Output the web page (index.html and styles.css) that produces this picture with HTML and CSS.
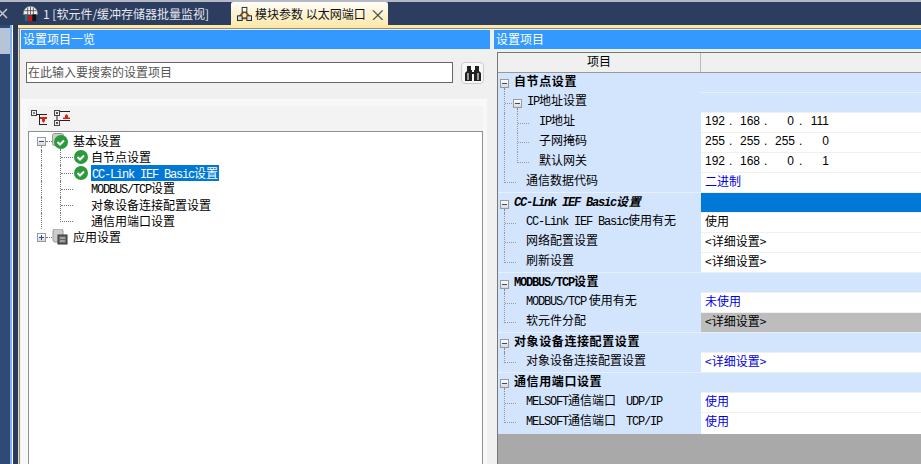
FILE: index.html
```html
<!DOCTYPE html>
<html lang="zh-CN">
<head>
  <meta charset="UTF-8">
  <title>模块参数 以太网端口</title>
  <link rel="stylesheet" href="styles.css">
</head>
<body>
  <div class="tabbar">
    <span class="tab-x">
      <svg width="8" height="11" viewBox="0 0 8 11">
        <path d="M-2 1l9 9M7 1l-9 9" stroke="#c4cbd6" stroke-width="1.500" fill="none"/>
      </svg>
    </span>
    <div class="tab">
      <svg class="tab-icon" viewBox="0 0 16 16">
        <path d="M0.500 9C0.500 3 4 0.500 8 0.500s7.500 2.500 7.500 8.500z" fill="#f4f4f4" stroke="#888"/>
        <path d="M5 2v7M8 1v8M11 2v7M2 5h12" stroke="#555"/>
        <rect x="2" y="9" width="3" height="7" fill="#0a7a7a"/>
        <rect x="5" y="10" width="5" height="6" fill="#d01020"/>
        <rect x="10" y="9" width="4" height="7" fill="#111"/>
      </svg>
      <span>1 [软元件/缓冲存储器批量监视]</span>
    </div>
    <div class="tab tab-active">
      <svg class="tab-icon" viewBox="0 0 16 16">
        <path d="M8 5L3 11M8 5l5 6M3 13h10" stroke="#8a4a10" stroke-width="2" fill="none"/>
        <rect x="5.5" y="1.5" width="5" height="5" fill="#fff" stroke="#222"/>
        <rect x="0.5" y="10.5" width="5" height="5" fill="#ddd" stroke="#222"/>
        <rect x="10.5" y="10.5" width="5" height="5" fill="#ddd" stroke="#222"/>
      </svg>
      <span>模块参数 以太网端口</span>
      <span class="tab-close">×</span>
    </div>
  </div>

  <div class="workspace">
    <div class="gutter">
      <div class="gutter-tab"></div>
    </div>

    <div class="content">
      <div class="accent"></div>
      <div class="panes">
        <section class="pane-left">
          <h2 class="pane-title">设置项目一览</h2>
          <div class="search-row">
            <div class="search-input">在此输入要搜索的设置项目</div>
            <div class="search-btn">
              <svg width="18" height="16" viewBox="0 0 18 16">
                <path d="M3 1h4v4h1v2h2V5h1V1h4v5l2 2v8h-7V9H8v7H1V8l2-2z" fill="#222"/>
                <path d="M3 8h2v7H3zM13 8h2v7h-2z" fill="#999"/>
              </svg>
            </div>
          </div>
          <div class="tree-box">
            <div class="tree-tools">
              <svg width="16" height="16" viewBox="0 0 16 16">
                <rect x="0.5" y="0.5" width="5" height="5" fill="#eee" stroke="#444"/>
                <path d="M2 3h2M6 4.500h10M8.500 4.500v10.500M8.500 14.500h7.500" stroke="#222" fill="none"/>
                <path d="M9 7h7v2h-2v2l-1.500 2-1.500-2V9H9z" fill="#e02010"/>
              </svg>
              <svg width="16" height="16" viewBox="0 0 16 16">
                <rect x="0.500" y="0.500" width="5" height="5" fill="#eee" stroke="#444"/>
                <rect x="0.500" y="10.500" width="5" height="5" fill="#eee" stroke="#444"/>
                <path d="M2 3h2M3 2v2M2 13h2M3 12v2M6 1.500h10M6 10.500h10M3 6v4" stroke="#222" fill="none"/>
                <path d="M9 9V7.500h2V5.500L12.500 4 14 5.500v2h2V9z" fill="#e02010"/>
              </svg>
            </div>
            <div class="tree">
              <div class="tree-row">
                <span class="box box-open"></span><span class="dash"></span>
                <svg class="tree-icon" width="16" height="16" viewBox="0 0 16 16">
                  <rect x="0.500" y="0.500" width="11" height="12" rx="2" fill="#ccc" stroke="#999"/>
                  <circle cx="9" cy="9" r="7" fill="#2a9a3a"/>
                  <path d="M5.500 9l2.500 2.500 4-4" stroke="#fff" stroke-width="2" fill="none"/>
                </svg>
                <span class="tree-text">基本设置</span>
              </div>
              <div class="tree-row">
                <span class="tree-bar"></span><span class="tee"></span>
                <svg class="check" width="14" height="14" viewBox="0 0 14 14">
                  <circle cx="7" cy="7" r="7" fill="#2a9a3a"/>
                  <path d="M3.500 7l2.500 2.500 4-4" stroke="#fff" stroke-width="2" fill="none"/>
                </svg>
                <span class="tree-text">自节点设置</span>
              </div>
              <div class="tree-row">
                <span class="tree-bar"></span><span class="tee"></span>
                <svg class="check" width="14" height="14" viewBox="0 0 14 14">
                  <circle cx="7" cy="7" r="7" fill="#2a9a3a"/>
                  <path d="M3.500 7l2.500 2.500 4-4" stroke="#fff" stroke-width="2" fill="none"/>
                </svg>
                <span class="tree-text selected"><span class="en">CC-Link IEF Basic</span>设置</span>
              </div>
              <div class="tree-row">
                <span class="tree-bar"></span><span class="tee"></span>
                <span class="tree-text no-icon"><span class="en">MODBUS/TCP</span>设置</span>
              </div>
              <div class="tree-row">
                <span class="tree-bar"></span><span class="tee"></span>
                <span class="tree-text no-icon">对象设备连接配置设置</span>
              </div>
              <div class="tree-row">
                <span class="tree-bar"></span><span class="tee-end"></span>
                <span class="tree-text no-icon">通信用端口设置</span>
              </div>
              <div class="tree-row">
                <span class="box box-plus"></span><span class="dash"></span>
                <svg class="tree-icon" width="16" height="16" viewBox="0 0 16 16">
                  <rect x="1" y="0" width="10" height="13" rx="2" fill="#ccc" stroke="#999"/>
                  <rect x="6" y="6" width="9" height="9" fill="#666" stroke="#333"/>
                  <path d="M8 9h5M8 12h5" stroke="#ddd"/>
                </svg>
                <span class="tree-text">应用设置</span>
              </div>
            </div>
          </div>
        </section>

        <section class="pane-right">
          <h2 class="pane-title">设置项目</h2>
          <div class="grid-wrap">
            <div class="grid">
              <div class="grid-head">
                <div class="head-name">项目</div>
                <div class="head-val"></div>
              </div>

              <div class="row row-first row-group">
                <div class="name"><span class="box box-open"></span><b class="group-text">自节点设置</b></div>
                <div class="val val-group"></div>
              </div>
              <div class="row">
                <div class="name"><span class="tee-t"></span><span class="box box-open"></span><span class="label-sub"><span class="en">IP</span>地址设置</span></div>
                <div class="val val-group"></div>
              </div>
              <div class="row">
                <div class="name"><span class="bar-t"></span><span class="tee-t"></span><span class="label"><span class="en">IP</span>地址</span></div>
                <div class="val ip"><span class="oct">192</span><span class="dot">.</span><span class="oct">168</span><span class="dot">.</span><span class="oct">0</span><span class="dot">.</span><span class="oct">111</span></div>
              </div>
              <div class="row">
                <div class="name"><span class="bar-t"></span><span class="tee-t"></span><span class="label">子网掩码</span></div>
                <div class="val ip"><span class="oct">255</span><span class="dot">.</span><span class="oct">255</span><span class="dot">.</span><span class="oct">255</span><span class="dot">.</span><span class="oct">0</span></div>
              </div>
              <div class="row">
                <div class="name"><span class="bar-t"></span><span class="elbow-t"></span><span class="label">默认网关</span></div>
                <div class="val ip"><span class="oct">192</span><span class="dot">.</span><span class="oct">168</span><span class="dot">.</span><span class="oct">0</span><span class="dot">.</span><span class="oct">1</span></div>
              </div>
              <div class="row">
                <div class="name"><span class="elbow-t"></span><span class="label">通信数据代码</span></div>
                <div class="val link">二进制</div>
              </div>

              <div class="row row-group">
                <div class="name"><span class="box box-open"></span><b class="group-text group-ital"><span class="en">CC-Link IEF Basic</span>设置</b></div>
                <div class="val val-active"></div>
              </div>
              <div class="row">
                <div class="name"><span class="tee-t"></span><span class="label"><span class="en">CC-Link IEF Basic</span>使用有无</span></div>
                <div class="val">使用</div>
              </div>
              <div class="row">
                <div class="name"><span class="tee-t"></span><span class="label">网络配置设置</span></div>
                <div class="val">&lt;详细设置&gt;</div>
              </div>
              <div class="row">
                <div class="name"><span class="elbow-t"></span><span class="label">刷新设置</span></div>
                <div class="val">&lt;详细设置&gt;</div>
              </div>

              <div class="row row-group">
                <div class="name"><span class="box box-open"></span><b class="group-text"><span class="en">MODBUS/TCP</span>设置</b></div>
                <div class="val val-group"></div>
              </div>
              <div class="row">
                <div class="name"><span class="tee-t"></span><span class="label"><span class="en">MODBUS/TCP</span> 使用有无</span></div>
                <div class="val link">未使用</div>
              </div>
              <div class="row">
                <div class="name"><span class="elbow-t"></span><span class="label">软元件分配</span></div>
                <div class="val val-off">&lt;详细设置&gt;</div>
              </div>

              <div class="row row-group">
                <div class="name"><span class="box box-open"></span><b class="group-text">对象设备连接配置设置</b></div>
                <div class="val val-group"></div>
              </div>
              <div class="row">
                <div class="name"><span class="elbow-t"></span><span class="label">对象设备连接配置设置</span></div>
                <div class="val link">&lt;详细设置&gt;</div>
              </div>

              <div class="row row-group">
                <div class="name"><span class="box box-open"></span><b class="group-text">通信用端口设置</b></div>
                <div class="val val-group"></div>
              </div>
              <div class="row">
                <div class="name"><span class="tee-t"></span><span class="label"><span class="en">MELSOFT</span>通信端口<span class="en en-gap">UDP/IP</span></span></div>
                <div class="val link">使用</div>
              </div>
              <div class="row row-last">
                <div class="name"><span class="elbow-t"></span><span class="label"><span class="en">MELSOFT</span>通信端口<span class="en en-gap">TCP/IP</span></span></div>
                <div class="val link">使用</div>
              </div>
            </div>
          </div>
        </section>
      </div>
    </div>
  </div>
</body>
</html>
```

FILE: styles.css
```css
* {
  box-sizing: border-box;
}
html, body {
  margin: 0;
  height: 100%;
}
body {
  width: 921px;
  height: 464px;
  overflow: hidden;
  display: flex;
  flex-direction: column;
  background: #2c3d60;
  font-family: "Noto Sans CJK SC", sans-serif;
  font-size: 12px;
  color: #000;
}
h2 {
  margin: 0;
  font-weight: normal;
  font-size: 12px;
}
.en {
  font-family: "Liberation Mono", monospace;
  font-size: 12px;
  letter-spacing: -1.2px;
}
.en-gap {
  margin-left: 10px;
}

/* tab strip */
.tabbar {
  height: 25px;
  flex: none;
  display: flex;
  align-items: flex-end;
  border-top: 2px solid #b4b9c4;
  background: #2c3d60;
}
.tab-x {
  width: 23px;
  height: 23px;
  display: flex;
  align-items: center;
}
.tab {
  width: 208px;
  height: 23px;
  display: flex;
  align-items: center;
  gap: 5px;
  color: #e6e9ef;
  white-space: nowrap;
}
.tab-icon {
  width: 15px;
  height: 15px;
  flex: none;
}
.tab-active {
  width: 157px;
  padding-left: 6px;
  gap: 3px;
  color: #111;
  background: linear-gradient(#fdfdf8, #fdeab0);
  border-radius: 2px 2px 0 0;
}
.tab-close {
  margin-left: 1px;
  font-size: 16px;
  line-height: 20px;
  color: #444;
}

/* main area */
.workspace {
  flex: 1;
  display: flex;
  min-height: 0;
}
.gutter {
  width: 18px;
  flex: none;
  background: #2b3a58;
  border-left: 10px solid #2f4a75;
  box-shadow: inset 2px 0 0 #7fb0ee, inset 3px 0 0 #fff;
  position: relative;
}
.gutter-tab {
  position: absolute;
  left: -10px;
  top: 3px;
  width: 10px;
  height: 26px;
  background: #b6c4da;
}
.content {
  flex: 1;
  display: flex;
  flex-direction: column;
  min-width: 0;
}
.accent {
  height: 4px;
  flex: none;
  background: #fde8a8;
  border-bottom: 1px solid #8d8d8d;
  margin-bottom: 1px;
}
.panes {
  flex: 1;
  display: flex;
  gap: 4px;
  min-height: 0;
  padding-left: 3px;
  background: #f0f0f0;
  box-shadow: inset 1px 0 0 #e6d9a8, inset 2px 0 0 #8a8f98;
  margin-top: -1px;
  padding-top: 1px;
}
.pane-title {
  height: 19px;
  padding-left: 2px;
  line-height: 18px;
  color: #fff;
  background: #3399ff;
}

/* left pane */
.pane-left {
  width: 469px;
  flex: none;
  display: flex;
  flex-direction: column;
}
.search-row {
  display: flex;
  align-items: center;
  margin: 12px 0 15px 5px;
  height: 23px;
}
.search-input {
  width: 427px;
  height: 21px;
  padding-left: 1px;
  border: 1px solid #666;
  background: #fff;
  line-height: 18px;
  color: #555;
}
.search-btn {
  width: 23px;
  height: 22px;
  margin-left: 8px;
  display: flex;
  align-items: center;
  justify-content: center;
  background: #f8f8f8;
  border: 1px solid #ccc;
  border-radius: 4px;
}
.tree-box {
  flex: 1;
  min-height: 0;
  display: flex;
  flex-direction: column;
  width: 466px;
  padding: 6px 4px 0 0;
  border-top: 1px solid #fafafa;
  background: #f8f8f8;
}
.tree-tools {
  height: 25px;
  flex: none;
  display: flex;
  gap: 7px;
  margin-left: 7px;
  padding: 4px 0 0 3px;
  background: #f3f3f3;
}
.tree {
  flex: 1;
  margin-left: 7px;
  padding-top: 1px;
  border: 1px solid #8a8f98;
  border-bottom: 0;
  background: #fff;
}
.tree-row {
  height: 16px;
  display: flex;
  align-items: center;
  padding-left: 8px;
  white-space: nowrap;
}
.tree-text {
  line-height: 16px;
  margin-left: 5px;
}
.tree-bar {
  width: 19px;
  height: 16px;
  margin-left: 4px;
  border-left: 1px dotted #777;
}
.tee {
  width: 13px;
  height: 16px;
  position: relative;
  border-left: 1px dotted #777;
}
.tee::after {
  content: "";
  position: absolute;
  left: 0;
  top: 8px;
  width: 12px;
  border-top: 1px dotted #777;
}
.tee-end {
  width: 13px;
  height: 9px;
  align-self: flex-start;
  border-left: 1px dotted #777;
  border-bottom: 1px dotted #777;
}
.check {
  margin-left: 1px;
  flex: none;
}
.check + .tree-text {
  margin-left: 3px;
}
.no-icon {
  margin-left: 18px;
}
.selected {
  height: 16px;
  margin-left: 2px;
  padding: 0 1px;
  color: #fff;
  background: #0078d7;
}
.dash {
  width: 6px;
  border-top: 1px dotted #777;
}
.tree-icon {
  flex: none;
}

/* expander boxes shared by the tree and the grid */
.box {
  width: 9px;
  height: 9px;
  flex: none;
  position: relative;
  border: 1px solid #999;
  background: linear-gradient(#fff, #d8d8d8);
}
.box::before {
  content: "";
  position: absolute;
  left: 1px;
  top: 3px;
  width: 5px;
  height: 1px;
  background: #2f4a9a;
}
.box-open::after {
  content: "";
  position: absolute;
  left: 3px;
  top: 8px;
  height: 6px;
  border-left: 1px dotted #888;
}
.box-plus::after {
  content: "";
  position: absolute;
  left: 3px;
  top: 1px;
  width: 1px;
  height: 5px;
  background: #2f4a9a;
}

/* right pane */
.pane-right {
  flex: 1;
  display: flex;
  flex-direction: column;
  min-width: 0;
}
.grid-wrap {
  flex: 1;
  padding: 3px 0 0 3px;
  min-height: 0;
}
.grid {
  height: 100%;
  border: 1px solid #777;
  border-width: 1px 0 0 1px;
  background: #a9a9a9;
}
.grid-head {
  display: grid;
  grid-template-columns: 203px 1fr;
  height: 19px;
  background: #f0f0f0;
}
.head-name {
  text-align: center;
  line-height: 16px;
  border-right: 1px solid #bbb;
}
.row {
  display: grid;
  grid-template-columns: 203px 1fr;
  height: 20px;
  white-space: nowrap;
}
.row-last {
  box-shadow: 0 1px 0 #777;
}
.name {
  display: flex;
  align-items: center;
  padding-left: 6px;
  background: #d3e5fd;
}
.row-group .name {
  padding-left: 2px;
  border-top: 1px solid #e8f0fb;
}
.row-first .name,
.row-first .val {
  border-top-color: #999;
}
.group-text,
.label-sub,
.label {
  line-height: 16px;
  margin-bottom: 4px;
}
.group-text {
  margin-left: 5px;
  letter-spacing: 0.6px;
}
.group-ital {
  font-style: italic;
}
.label-sub {
  margin-left: 5px;
}
.name > .tee-t + .box {
  margin-left: -3px;
}
.label {
  margin-left: 10px;
}
.tee-t {
  width: 12px;
  height: 20px;
  flex: none;
  position: relative;
  border-left: 1px dotted #999;
}
.tee-t::after {
  content: "";
  position: absolute;
  left: 0;
  top: 10px;
  width: 11px;
  border-top: 1px dotted #999;
}
.bar-t {
  width: 13px;
  height: 20px;
  flex: none;
  border-left: 1px dotted #999;
}
.elbow-t {
  width: 12px;
  height: 11px;
  flex: none;
  align-self: flex-start;
  border-left: 1px dotted #999;
  border-bottom: 1px dotted #999;
}
.val {
  padding-left: 4px;
  line-height: 16px;
  background: #fff;
  border-top: 1px solid #f0f0f0;
}
.val-group {
  background: #d3e5fd;
  border-top-color: #e8f0fb;
}
.val-active {
  background: #0078d7;
}
.val-off {
  background: #bdbdbd;
}
.link {
  color: #0000e0;
}
.ip {
  display: flex;
  font-family: "Liberation Sans", sans-serif;
  font-size: 12px;
}
.oct {
  width: 19px;
  text-align: right;
}
.dot {
  width: 16px;
  padding-left: 5px;
}
```
